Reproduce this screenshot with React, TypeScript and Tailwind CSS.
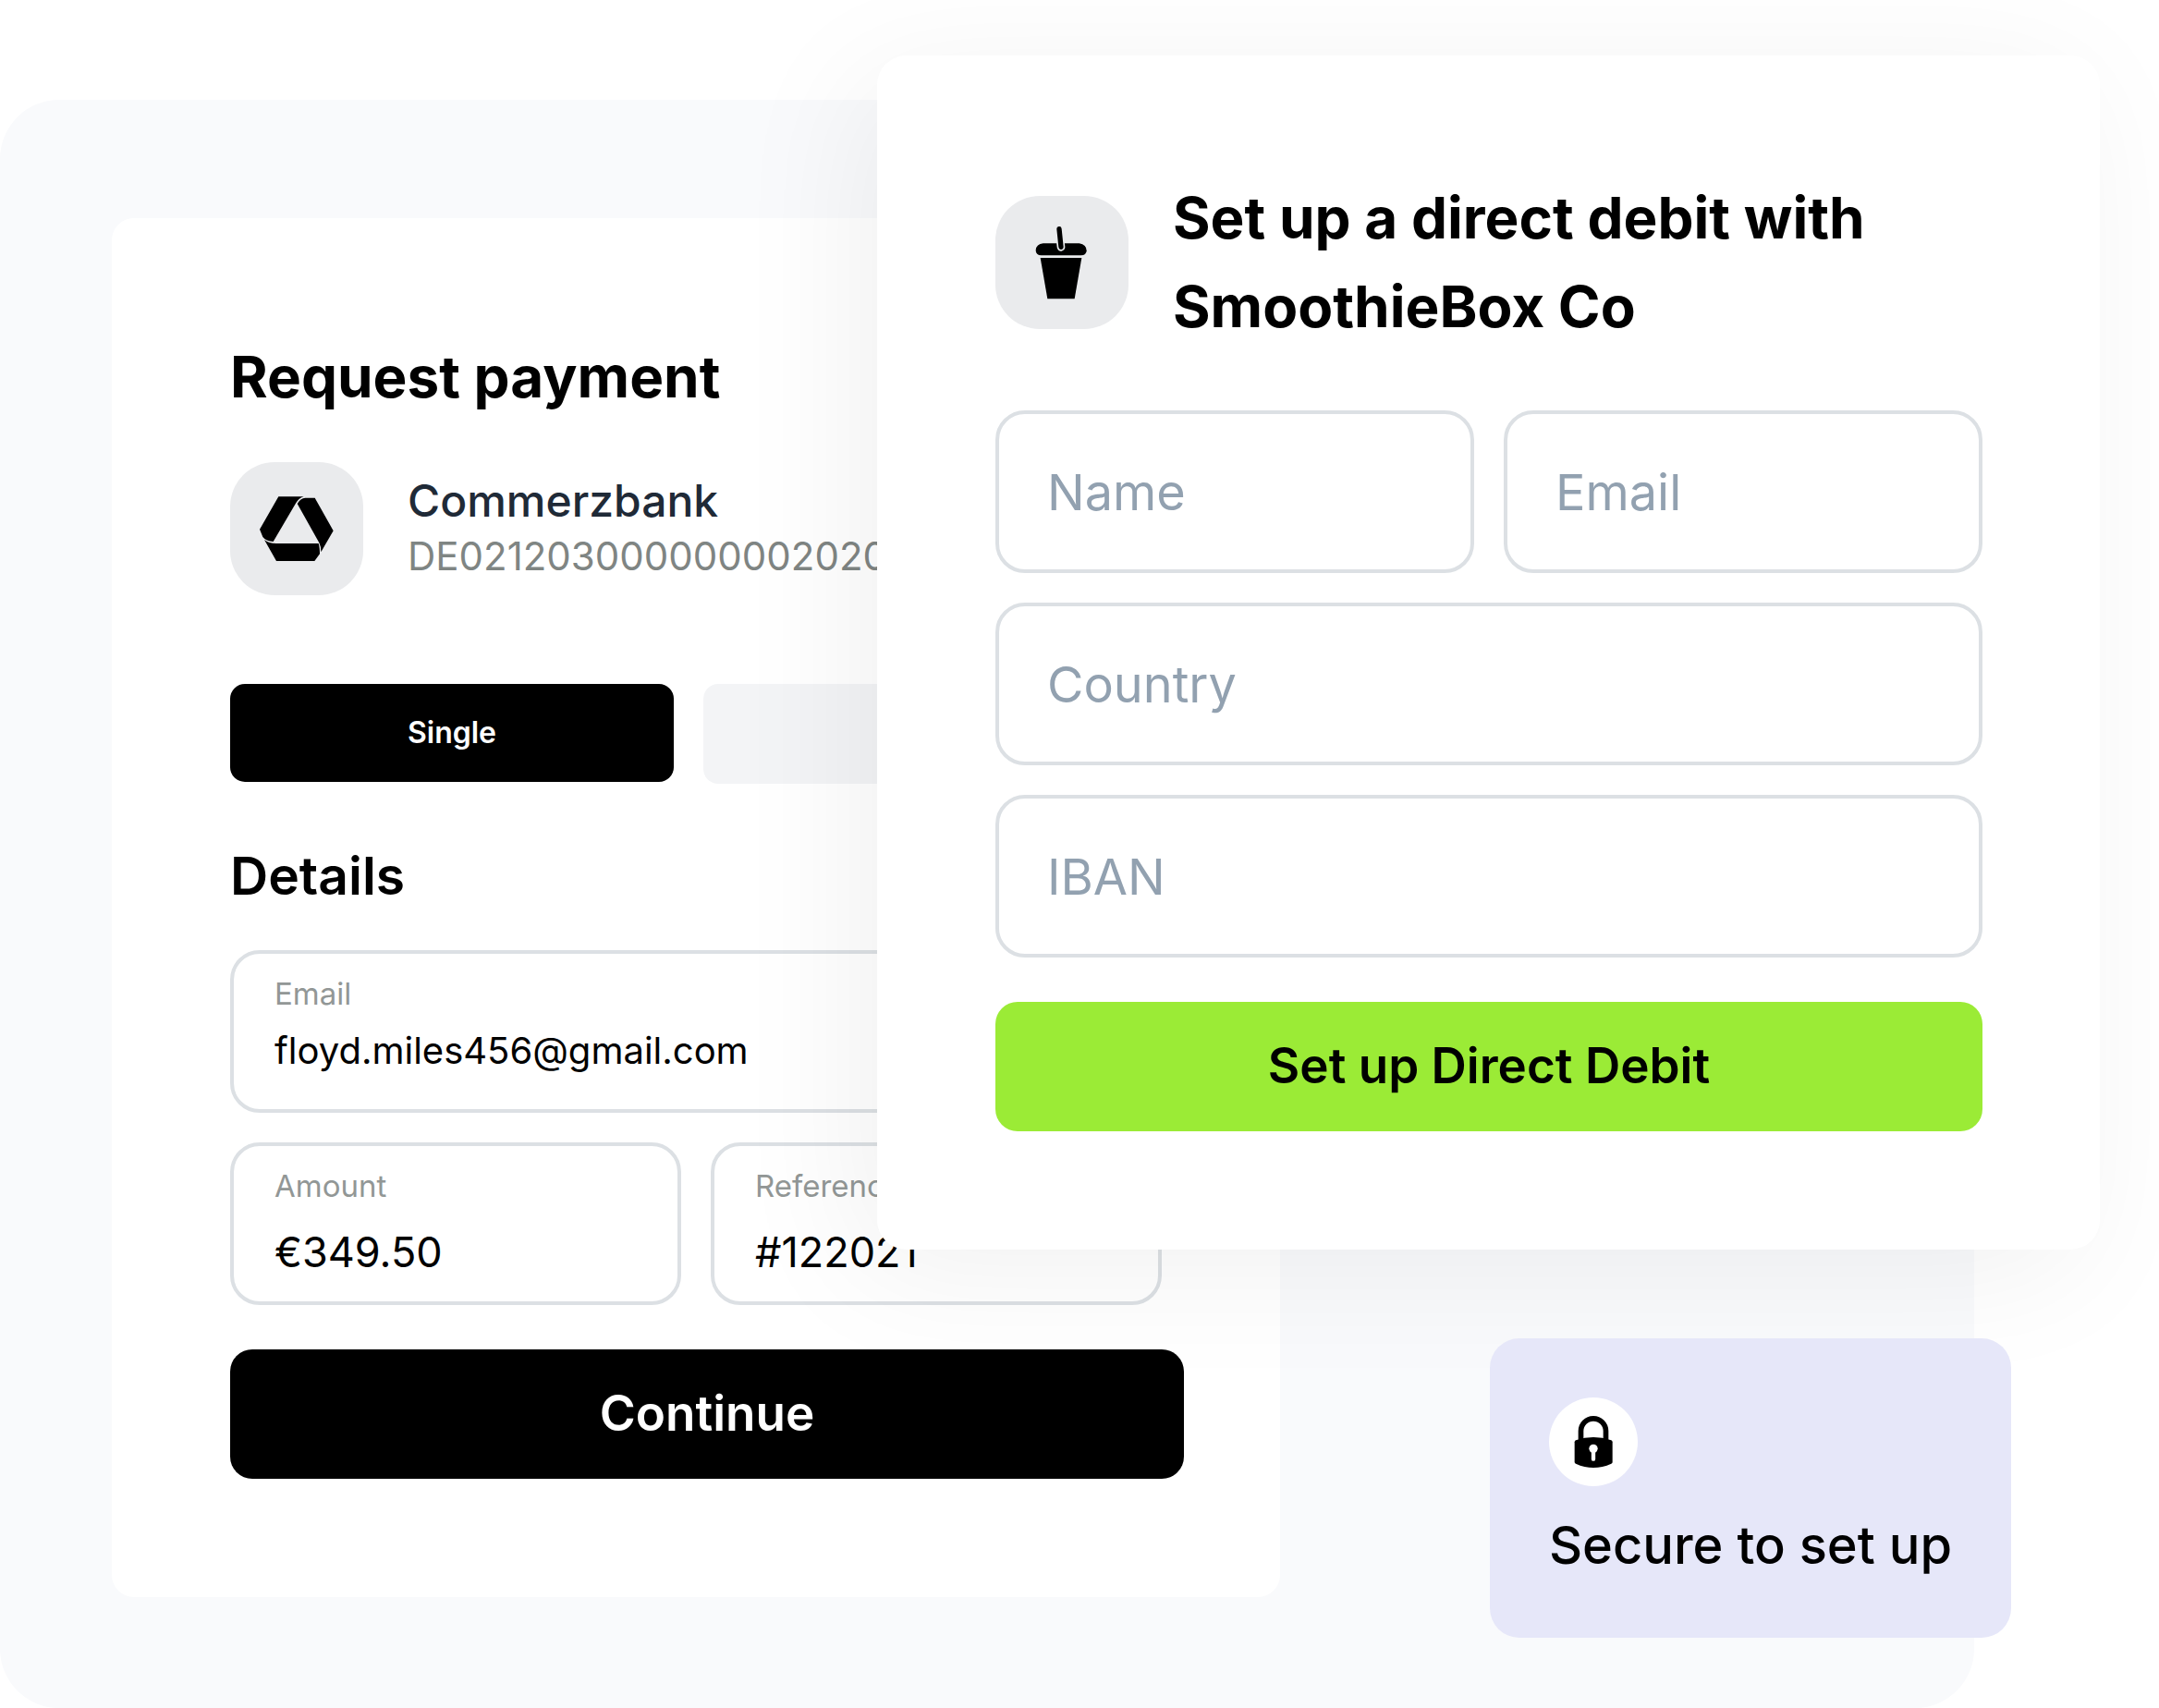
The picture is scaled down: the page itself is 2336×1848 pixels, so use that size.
import { useId } from "react";
import clsx from "clsx";

function BankLogo() {
  return (
    <svg viewBox="0 0 432 432" className="size-full" aria-hidden="true">
      <path d="M157 112H239Q223 117 214 132L140 258Q116 256 106 243L96 218Z" />
      <path d="M244 116H275L335 223L295 292Q296 276 289 262L218 135Q228 117 244 116Z" />
      <path d="M111 252Q125 264 150 264H287Q291 276 291 298L274 321H150Z" />
    </svg>
  );
}

function CupLogo() {
  return (
    <svg viewBox="0 0 432 432" className="size-full" aria-hidden="true">
      <path d="M155 154H272Q296 158 296 178Q295 193 278 193H149Q131 192 131 176Q133 156 155 154Z" />
      <path d="M207 107L213 166" stroke="#eaebed" strokeWidth="26" strokeLinecap="round" />
      <path d="M207 107L213 166" stroke="#000" strokeWidth="16" strokeLinecap="round" />
      <path d="M146 201H280L257 334H169Z" />
    </svg>
  );
}

function LockIcon() {
  return (
    <svg viewBox="0 0 288 288" className="size-full" aria-hidden="true">
      <path d="M103.500 142V109a40.500 40.500 0 0 1 81 0V142" fill="none" stroke="#000" strokeWidth="17" />
      <path d="M83 145Q83 141 87 139Q144 119 202 139Q206 141 206 145V210Q206 213 202 215Q144 241 87 215Q83 213 83 210Z" />
      <circle cx="144" cy="166" r="14" fill="#fff" />
      <path d="M144 168V200" stroke="#fff" strokeWidth="13" strokeLinecap="round" />
    </svg>
  );
}

function Tile({ children }: { children: React.ReactNode }) {
  return <div className="size-36 shrink-0 rounded-[48px] bg-[#eaebed]">{children}</div>;
}

type FilledFieldProps = { label: string; value: string; className?: string; large?: boolean };

function FilledField({ label, value, className, large }: FilledFieldProps) {
  const id = useId();
  return (
    <div className={clsx("h-44 min-w-0 rounded-[32px] border-4 border-[#dce0e4] px-11 pt-5", className)}>
      <label htmlFor={id} className="block text-[33px] leading-[46px] text-[#929796]">{label}</label>
      <input
        id={id}
        defaultValue={value}
        className={clsx("block w-full bg-transparent text-black outline-none", large ? "h-24 text-[45px]" : "h-[76px] text-[40px]")}
      />
    </div>
  );
}

function BlankField({ label, className }: { label: string; className?: string }) {
  return (
    <input
      aria-label={label}
      placeholder={label}
      className={clsx("h-44 w-full min-w-0 rounded-[32px] border-4 border-[#dce0e4] px-[52px] text-[54px] outline-none placeholder:text-[#92a1b0]", className)}
    />
  );
}

function RequestPayment() {
  return (
    <form className="rounded-3xl bg-white py-32 pr-[104px] pl-32">
      <h1 className="text-[62px] leading-[88px] font-bold">Request payment</h1>
      <div className="mt-12 flex items-center gap-12">
        <Tile><BankLogo /></Tile>
        <div className="whitespace-nowrap">
          <p className="text-[48px] leading-[60px] font-medium text-[#1f2a37]">Commerzbank</p>
          <p className="text-[42px] leading-[60px] text-[#7f8583]">DE02120300000000202051</p>
        </div>
      </div>
      <div className="mt-24 mr-10 grid grid-cols-2 items-start gap-8">
        <button type="button" className="h-[106px] rounded-2xl bg-black text-[32px] font-semibold text-white">Single</button>
        <button type="button" aria-label="Recurring" className="h-[108px] rounded-2xl bg-[#f3f4f6]" />
      </div>
      <h2 className="mt-16 text-[57px] leading-[72px] font-semibold">Details</h2>
      <div className="mt-11 mr-6 grid grid-cols-2 gap-8">
        <FilledField label="Email" value="floyd.miles456@gmail.com" className="col-span-2" />
        <FilledField label="Amount" value="€349.50" large />
        <FilledField label="Reference" value="#122021" large />
      </div>
      <button type="button" className="mt-12 h-[140px] w-full rounded-3xl bg-black text-[53px] font-semibold text-white">Continue</button>
    </form>
  );
}

function DirectDebit() {
  return (
    <form className="absolute top-[60px] right-16 left-[949px] rounded-[32px] bg-white p-32 pr-[127px] shadow-[-24px_24px_144px_rgba(0,0,0,0.06)]">
      <div className="flex items-center gap-12">
        <Tile><CupLogo /></Tile>
        <h2 className="text-[62px] leading-[96px] font-bold">
          Set up a direct debit with<br />SmoothieBox Co
        </h2>
      </div>
      <div className="mt-16 grid grid-cols-2 gap-8">
        <BlankField label="Name" />
        <BlankField label="Email" />
        <BlankField label="Country" className="col-span-2" />
        <BlankField label="IBAN" className="col-span-2" />
      </div>
      <button type="button" className="mt-12 h-[140px] w-full rounded-3xl bg-[#9beb36] text-[53px] font-semibold text-black">Set up Direct Debit</button>
    </form>
  );
}

function SecureBadge() {
  return (
    <aside className="absolute right-40 bottom-[76px] flex flex-col gap-7 rounded-[32px] bg-[#e6e7f9] p-16">
      <div className="size-24 rounded-full bg-white"><LockIcon /></div>
      <p className="text-[56px] leading-[72px] font-medium whitespace-nowrap">Secure to set up</p>
    </aside>
  );
}

export default function App() {
  return (
    <main className="relative min-h-screen overflow-hidden bg-white pt-[108px] font-['Inter',sans-serif] text-black">
      <div className="mr-[200px] rounded-[64px] bg-[#f9fafc] pt-32 pr-[751px] pb-[120px] pl-[121px]">
        <RequestPayment />
      </div>
      <DirectDebit />
      <SecureBadge />
    </main>
  );
}
